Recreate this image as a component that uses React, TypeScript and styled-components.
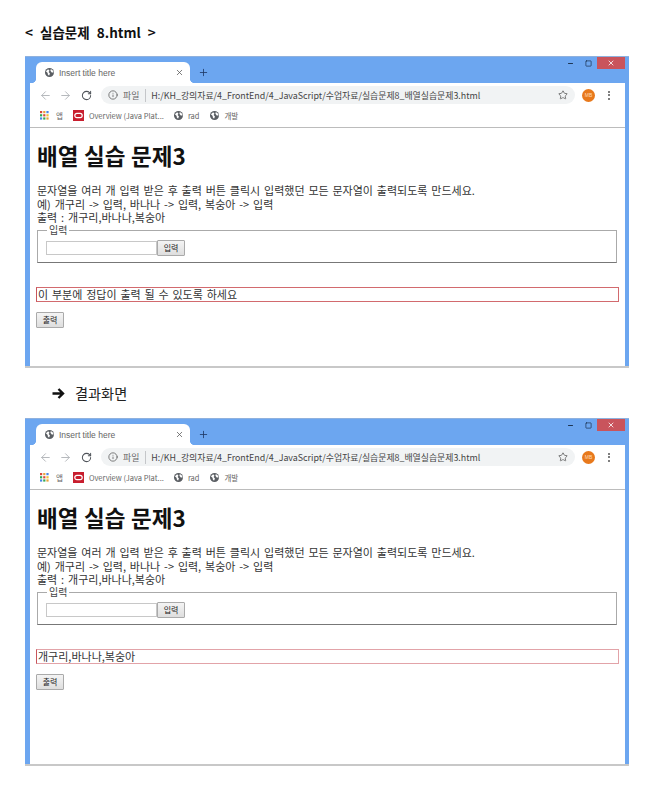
import React from "react";
import styled, { createGlobalStyle } from "styled-components";
import { ArrowLeft, ArrowRight, RotateCw, Star, X, Plus, Info, Minus, Square } from "lucide-react";

const GlobalStyle = createGlobalStyle`
  html, body {
    margin: 0;
    padding: 0;
    background: #fff;
    font-family: "Noto Sans CJK KR", "Liberation Sans", sans-serif;
    color: #111;
  }
`;

const Page = styled.div`
  width: 667px;
  height: 803px;
  padding: 24px 38px 0 25px;
  box-sizing: border-box;
  overflow: hidden;
`;

const Heading = styled.div`
  font-size: 13.5px;
  font-weight: 700;
  line-height: 16px;
  height: 32px;
  word-spacing: 4px;
`;

const Arrow = styled.div`
  display: flex;
  align-items: center;
  gap: 10px;
  height: 50px;
  padding-left: 27px;
  font-size: 14.2px;
  color: #222;
`;

const Frame = styled.div<{ $height: number }>`
  width: 604px;
  height: ${(p) => p.$height}px;
  box-sizing: border-box;
  background: #6ca6f0;
  border-top: 1px solid #8fb1de;
  border-bottom: 2px solid #c8c8c8;
  padding: 0 4px 0 5px;
  display: flex;
  flex-direction: column;
`;

const TitleBar = styled.div`
  height: 26px;
  display: flex;
  align-items: flex-end;
  flex-shrink: 0;
  padding-left: 6px;
`;

const Tab = styled.div`
  position: relative;
  width: 154px;
  height: 21px;
  box-sizing: border-box;
  background: #fff;
  border-radius: 6px 6px 0 0;
  display: flex;
  align-items: center;
  gap: 5px;
  padding: 0 6px 0 9px;
  font-family: "Liberation Sans", sans-serif;
  font-size: 8.5px;
  color: #666;

  &::before {
    content: "";
    position: absolute;
    left: -5px;
    bottom: 0;
    width: 5px;
    height: 5px;
    background: radial-gradient(circle at 0 0, transparent 5px, #fff 5.5px);
  }
  &::after {
    content: "";
    position: absolute;
    right: -5px;
    bottom: 0;
    width: 5px;
    height: 5px;
    background: radial-gradient(circle at 100% 0, transparent 5px, #fff 5.5px);
  }
`;

const TabTitle = styled.span`
  flex: 1;
`;

const NewTab = styled.div`
  display: flex;
  align-items: center;
  height: 21px;
  margin-left: 8px;
  color: #1f3a66;
`;

const Controls = styled.div`
  margin-left: auto;
  align-self: flex-start;
  display: flex;
  align-items: center;
  color: #14263f;
`;

const ControlBtn = styled.div<{ $close?: boolean }>`
  width: ${(p) => (p.$close ? "28px" : "18px")};
  height: 12px;
  display: flex;
  align-items: center;
  justify-content: center;
  background: ${(p) => (p.$close ? "#c9545c" : "transparent")};
  color: ${(p) => (p.$close ? "#fff" : "inherit")};
`;

const Toolbar = styled.div`
  height: 24px;
  background: #fff;
  display: flex;
  align-items: center;
  flex-shrink: 0;
  padding-left: 5px;
  color: #5f6368;
`;

const NavIcon = styled.div<{ $off?: boolean }>`
  width: 20.5px;
  display: flex;
  justify-content: center;
  color: ${(p) => (p.$off ? "#b4b7bb" : "#50545a")};
`;

const Omnibox = styled.div`
  width: 474px;
  height: 18px;
  margin-left: 4.5px;
  box-sizing: border-box;
  border-radius: 9px;
  background: #f1f3f4;
  display: flex;
  align-items: center;
  padding: 0 7px;
  font-size: 8.9px;
  color: #555;
  white-space: nowrap;
`;

const Site = styled.span`
  margin-left: 5px;
  padding-right: 6px;
  border-right: 1px solid #c4c6c9;
  color: #666;
`;

const Url = styled.span`
  flex: 1;
  margin-left: 5px;
  color: #444;
`;

const Avatar = styled.div`
  width: 13px;
  height: 13px;
  margin-left: 7px;
  border-radius: 50%;
  background: #e8791c;
  color: #ffd9b8;
  font-size: 5px;
  line-height: 13px;
  text-align: center;
  font-family: "Liberation Sans", sans-serif;
`;

const Dots = styled.div`
  margin-left: 13px;
  display: flex;
  flex-direction: column;
  gap: 1.5px;

  i {
    width: 2px;
    height: 2px;
    border-radius: 50%;
    background: #555;
  }
`;

const Bookmarks = styled.div`
  height: 21px;
  box-sizing: border-box;
  background: #fff;
  border-bottom: 1px solid #bcbcbc;
  display: flex;
  align-items: center;
  flex-shrink: 0;
  padding: 0 0 3px 10px;
  font-size: 7.5px;
  color: #666;
`;

const Mark = styled.span<{ $gap: number }>`
  display: flex;
  align-items: center;
  gap: 5px;
  margin-left: ${(p) => p.$gap}px;
  white-space: nowrap;
`;

const Content = styled.div`
  flex: 1;
  background: #fff;
  padding: 0 6px 0 6px;
  font-size: 11px;
  line-height: 13.5px;
  word-spacing: 1.4px;
  color: #333;
`;

const Title = styled.h1`
  margin: 0;
  padding: 12px 0 0 1px;
  font-size: 22.5px;
  line-height: 30px;
  font-weight: 700;
  word-spacing: 0.5px;
  color: #111;
  height: 55px;
  box-sizing: border-box;
`;

const Text = styled.div`
  padding: 1px 0 0 1px;
  height: 42px;
  box-sizing: border-box;
  white-space: nowrap;
`;

const Field = styled.fieldset`
  margin: 0 2px 0 1px;
  padding: 5px 8px 0;
  height: 38px;
  box-sizing: border-box;
  border: 1px solid #aaa;
  border-bottom-color: #777;
  display: flex;
`;

const Legend = styled.legend`
  padding: 0 2px;
  margin-left: 1px;
  line-height: 10px;
  font-size: 10px;
  color: #444;
`;

const InputRow = styled.div`
  display: flex;
  align-items: center;
  height: 16px;
`;

const TextInput = styled.input`
  width: 111px;
  height: 14px;
  box-sizing: border-box;
  padding: 0;
  border: 1px solid #c8c8c8;
  background: #fff;
  outline: none;
`;

const Btn = styled.button`
  width: 28px;
  height: 16px;
  box-sizing: border-box;
  padding: 0;
  border: 1px solid #aaa;
  border-radius: 1px;
  background: linear-gradient(#f4f4f4, #dedede);
  font-family: inherit;
  font-size: 8px;
  line-height: 14px;
  color: #222;
`;

const Output = styled.div<{ $soft?: boolean }>`
  margin: 24px 0 0 0;
  height: 15px;
  box-sizing: border-box;
  border: 1px solid ${(p) => (p.$soft ? "#e2a3a8" : "#d26a6e")};
  border-left-color: #c8555b;
  padding-left: 1px;
  line-height: 13px;
  color: #333;
  white-space: nowrap;
`;

const SubmitRow = styled.div`
  margin-top: 10px;
`;

const Globe = () => (
  <svg width="9" height="9" viewBox="0 0 10 10">
    <circle cx="5" cy="5" r="5" fill="#5a5e63" />
    <path d="M1 3.5 3.5 1.5 5 3 4 4.5 5.5 6 4.5 8.5 3 7 3 5.5Z M6.5 1 9 3 9.5 5 7.5 5 6 3Z" fill="#fff" />
  </svg>
);

const AppsGrid = () => (
  <svg width="9" height="9" viewBox="0 0 9 9">
    {["#d9483b", "#e8a33d", "#4a86e8", "#34a853", "#d9483b", "#f2c037", "#4a86e8", "#34a853", "#e8a33d"].map((c, i) => (
      <rect key={i} x={(i % 3) * 3.2} y={Math.floor(i / 3) * 3.2} width="2.2" height="2.2" fill={c} />
    ))}
  </svg>
);

const OracleIcon = () => (
  <svg width="11" height="11" viewBox="0 0 11 11">
    <rect width="11" height="11" fill="#c81e2e" />
    <rect x="1.8" y="3.4" width="7.4" height="4.2" rx="2.1" fill="none" stroke="#fff" strokeWidth="1.2" />
  </svg>
);

const BoldArrow = () => (
  <svg width="13" height="11" viewBox="0 0 13 11">
    <path d="M0.5 5.5H10M6.5 1 11 5.5 6.5 10" fill="none" stroke="#111" strokeWidth="2.4" />
  </svg>
);

const Browser: React.FC<{ height: number; result: string; soft?: boolean }> = ({ height, result, soft }) => (
  <Frame $height={height}>
    <TitleBar>
      <Tab>
        <Globe />
        <TabTitle>Insert title here</TabTitle>
        <X size={9} strokeWidth={2} color="#555" />
      </Tab>
      <NewTab>
        <Plus size={11} strokeWidth={1.8} />
      </NewTab>
      <Controls>
        <ControlBtn>
          <Minus size={7} strokeWidth={3} />
        </ControlBtn>
        <ControlBtn>
          <Square size={7} strokeWidth={2.2} />
        </ControlBtn>
        <ControlBtn $close>
          <X size={8} strokeWidth={2.4} />
        </ControlBtn>
      </Controls>
    </TitleBar>
    <Toolbar>
      <NavIcon $off>
        <ArrowLeft size={13} strokeWidth={1.8} />
      </NavIcon>
      <NavIcon $off>
        <ArrowRight size={13} strokeWidth={1.8} />
      </NavIcon>
      <NavIcon>
        <RotateCw size={11} strokeWidth={2.2} />
      </NavIcon>
      <Omnibox>
        <Info size={10} strokeWidth={1.8} />
        <Site>파일</Site>
        <Url>H:/KH_강의자료/4_FrontEnd/4_JavaScript/수업자료/실습문제8_배열실습문제3.html</Url>
        <Star size={10} strokeWidth={1.8} />
      </Omnibox>
      <Avatar>MB</Avatar>
      <Dots>
        <i />
        <i />
        <i />
      </Dots>
    </Toolbar>
    <Bookmarks>
      <AppsGrid />
      <Mark $gap={7}>앱</Mark>
      <Mark $gap={10}>
        <OracleIcon />
        Overview (Java Plat...
      </Mark>
      <Mark $gap={10}>
        <Globe />
        rad
      </Mark>
      <Mark $gap={11}>
        <Globe />
        개발
      </Mark>
    </Bookmarks>
    <Content>
      <Title>배열 실습 문제3</Title>
      <Text>
        문자열을 여러 개 입력 받은 후 출력 버튼 클릭시 입력했던 모든 문자열이 출력되도록 만드세요.
        <br />
        예) 개구리 -&gt; 입력, 바나나 -&gt; 입력, 복숭아 -&gt; 입력
        <br />
        출력 : 개구리,바나나,복숭아
      </Text>
      <Field>
        <Legend>입력</Legend>
        <InputRow>
          <TextInput />
          <Btn>입력</Btn>
        </InputRow>
      </Field>
      <Output $soft={soft}>{result}</Output>
      <SubmitRow>
        <Btn>출력</Btn>
      </SubmitRow>
    </Content>
  </Frame>
);

export default function App() {
  return (
    <Page>
      <GlobalStyle />
      <Heading>&lt; 실습문제 8.html &gt;</Heading>
      <Browser height={312} result="이 부분에 정답이 출력 될 수 있도록 하세요" />
      <Arrow>
        <BoldArrow />
        결과화면
      </Arrow>
      <Browser height={348} result="개구리,바나나,복숭아" soft />
    </Page>
  );
}
